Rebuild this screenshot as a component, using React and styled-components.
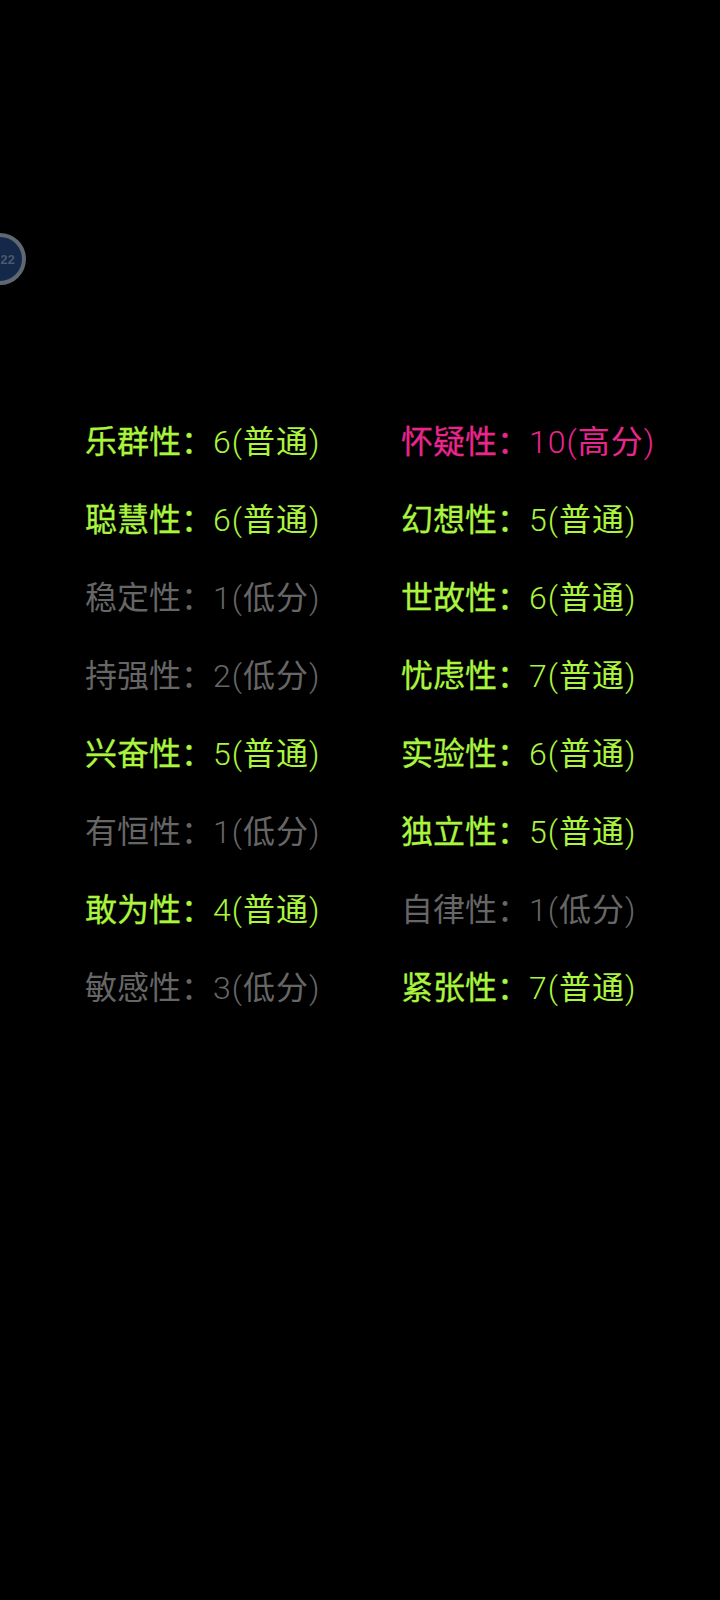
import styled, { createGlobalStyle } from "styled-components";

const GlobalStyle = createGlobalStyle`
  html, body {
    margin: 0;
    padding: 0;
    background: #000;
  }
`;

const COLORS = {
  normal: "#abf53f",
  low: "#666666",
  high: "#e8268e",
};

const Page = styled.div`
  position: relative;
  width: 720px;
  height: 1600px;
  overflow: hidden;
  background: #000;
  font-family: Roboto, "Noto Sans CJK SC", sans-serif;
`;

// floating badge hanging off the left edge
const Badge = styled.div`
  position: absolute;
  left: -26px;
  top: 233px;
  box-sizing: border-box;
  width: 52px;
  height: 52px;
  border-radius: 50%;
  border: 4px solid #5f6771;
  background: #14294a;
  display: flex;
  align-items: center;
  justify-content: flex-end;
  padding-right: 7px;
  color: #4b5a70;
  font-family: "Liberation Sans", sans-serif;
  font-size: 13px;
  font-weight: 700;
  filter: blur(0.6px);
`;

const Grid = styled.div`
  display: grid;
  grid-template-columns: 316px 1fr;
  grid-auto-rows: 78px;
  padding: 400px 0 0 85px;
`;

const Trait = styled.div`
  display: flex;
  align-items: baseline;
  white-space: nowrap;
  font-size: 32px;
  line-height: 78px;
  color: ${(p) => COLORS[p.$level]};
`;

// medium weight isn't installed, regular plus a thin stroke gets close
const Name = styled.span`
  font-family: "Noto Sans CJK SC", sans-serif;
  font-weight: 400;
  -webkit-text-stroke: ${(p) => (p.$level === "low" ? "0" : "0.3px")};
`;

const Score = styled.span`
  font-weight: 300;
  letter-spacing: 1px;
`;

const LevelWord = styled.span`
  font-weight: 400;
`;

const LEVEL_TEXT = { normal: "普通", low: "低分", high: "高分" };

const TRAITS = [
  ["乐群性", 6, "normal"],
  ["怀疑性", 10, "high"],
  ["聪慧性", 6, "normal"],
  ["幻想性", 5, "normal"],
  ["稳定性", 1, "low"],
  ["世故性", 6, "normal"],
  ["持强性", 2, "low"],
  ["忧虑性", 7, "normal"],
  ["兴奋性", 5, "normal"],
  ["实验性", 6, "normal"],
  ["有恒性", 1, "low"],
  ["独立性", 5, "normal"],
  ["敢为性", 4, "normal"],
  ["自律性", 1, "low"],
  ["敏感性", 3, "low"],
  ["紧张性", 7, "normal"],
];

const App = () => {
  return (
    <Page>
      <GlobalStyle />
      <Badge>22</Badge>
      <Grid>
        {TRAITS.map(([name, score, level]) => (
          <Trait key={name} $level={level}>
            <Name $level={level}>{name}：</Name>
            <Score>
              {score}(<LevelWord>{LEVEL_TEXT[level]}</LevelWord>)
            </Score>
          </Trait>
        ))}
      </Grid>
    </Page>
  );
};

export default App;
